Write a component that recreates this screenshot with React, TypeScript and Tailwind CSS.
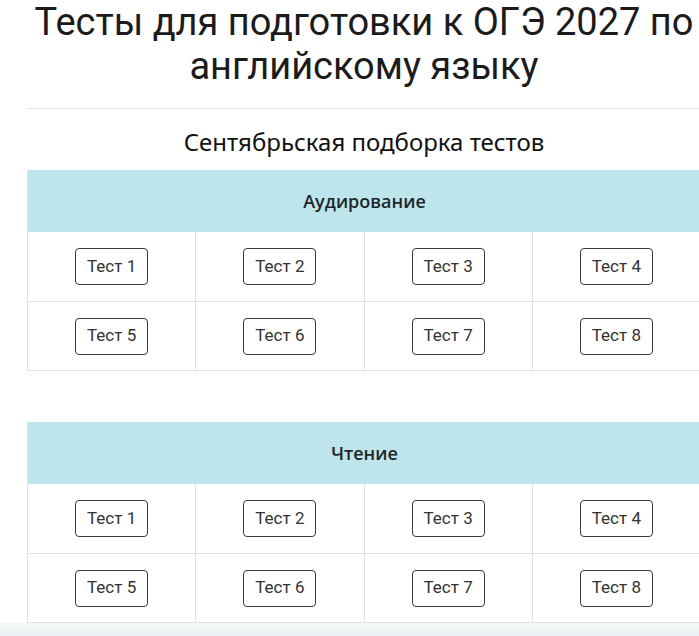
import React from 'react';

const tests = [1, 2, 3, 4, 5, 6, 7, 8];

function TestButton({ n }: { n: number }) {
  return (
    <button className="w-[73px] h-[37px] rounded-[4px] border border-[#3a3a3a] bg-white text-[17px] text-[#333] font-['Roboto',sans-serif]">
      Тест {n}
    </button>
  );
}

function TestSection({ title }: { title: string }) {
  return (
    <div className="border-l border-b border-[#dee2e6]">
      <div className="h-[62px] bg-[#bee5eb] flex items-center justify-center text-[18px] font-semibold text-[#212529] font-['Open_Sans',sans-serif]">
        {title}
      </div>
      <div className="grid grid-cols-4">
        {tests.map((n) => (
          <div
            key={n}
            className={`h-[69px] flex items-center justify-center border-r border-[#dee2e6] ${
              n > 4 ? 'border-t' : ''
            }`}
          >
            <TestButton n={n} />
          </div>
        ))}
      </div>
    </div>
  );
}

export default function App() {
  return (
    <div className="min-h-screen bg-white overflow-x-hidden">
      <div className="ml-[27px] w-[674px]">
        <h1 className="text-center text-[38px] leading-[44px] text-[#1b1b1b] font-['Roboto',sans-serif]">
          Тесты для подготовки к ОГЭ 2027 по английскому языку
        </h1>
        <hr className="mt-[20px] border-t border-[#e5e5e5]" />
        <h2 className="h-[61px] pt-[4px] flex items-center justify-center text-[24px] text-[#111] font-['Noto_Sans',sans-serif]">
          Сентябрьская подборка тестов
        </h2>
        <TestSection title="Аудирование" />
        <div className="h-[51px]" />
        <TestSection title="Чтение" />
      </div>
      <div className="h-[16px] bg-gradient-to-b from-[#f4f7f8] to-[#e9eff0]" />
    </div>
  );
}
